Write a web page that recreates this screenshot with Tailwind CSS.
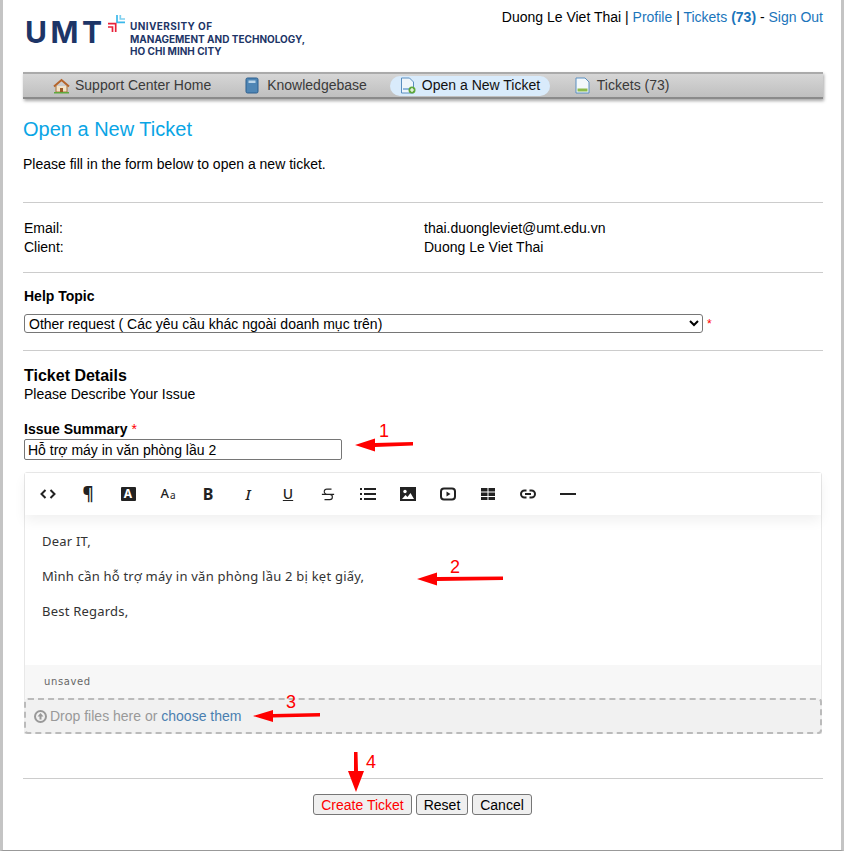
<!DOCTYPE html>
<html lang="en">
<head>
  <meta charset="UTF-8">
  <title>Open a New Ticket</title>
  <script src="https://cdn.jsdelivr.net/npm/@tailwindcss/browser@4"></script>
</head>
<body class="bg-white font-['Liberation_Sans',Arial,sans-serif] text-[14px] text-black">
  <div class="relative w-[844px] h-[851px] overflow-hidden border-x-[3px] border-b border-x-[#c4c4c4] border-b-[#999]">
    <div class="w-[800px] ml-[20px]">

      <!-- header -->
      <div class="h-[72px] flex justify-between">
        <div class="flex items-start pt-[15px] pl-[2px]">
          <span class="w-[83px] font-['Inter',sans-serif] font-bold text-[#1d3567] text-[30px] leading-[35px] tracking-[3.500px]">UMT</span>
          <svg width="17" height="17" viewBox="0 0 17 17" fill="none" stroke-width="1.700">
            <path d="M9 0v7.300h8" stroke="#3bb8ea"/>
            <path d="M12.300 0v4H17" stroke="#7fd0f0"/>
            <path d="M0 8.700h7.700V17" stroke="#e8213a"/>
            <path d="M0 12h4.500v5" stroke="#e8213a"/>
          </svg>
          <div class="mt-[5px] ml-[5px] font-['Inter',sans-serif] font-bold text-[#1d3567] text-[10px] leading-[12.600px]"><span class="tracking-[0.400px]">UNIVERSITY OF</span><br>MANAGEMENT AND TECHNOLOGY,<br>HO CHI MINH CITY</div>
        </div>
        <div class="pt-[9px] text-[14px] leading-[16px]">Duong Le Viet Thai | <a class="text-[#1b75bb]">Profile</a> | <a class="text-[#1b75bb]">Tickets <b>(73)</b></a> - <a class="text-[#1b75bb]">Sign Out</a></div>
      </div>

      <!-- nav -->
      <nav class="h-[27px] flex items-center border-t-2 border-b-[2px] border-t-[#aaa] border-b-[#8a8a8a] bg-gradient-to-b from-[#d6d6d6] to-[#bfbfbf] shadow-[1px_2px_3px_rgba(0,0,0,0.35)] text-[#3a3a3a] text-[14px]">
        <a class="flex items-center ml-[30px] gap-[5px]">
          <svg width="17" height="16" viewBox="0 0 17 16"><path d="M3 8v6h11V8" fill="#f3e3c8" stroke="#a9763c"/><path d="M1 8.500 8.500 2 16 8.500" fill="none" stroke="#b5642a" stroke-width="2"/><rect x="7" y="10" width="3" height="4" fill="#9c5b26"/><rect x="1" y="14" width="15" height="1.500" fill="#5fa83c"/></svg>
          Support Center Home</a>
        <a class="flex items-center ml-[34px] gap-[8px]">
          <svg width="14" height="17" viewBox="0 0 14 17"><rect x="1" y="1" width="12" height="15" rx="1.500" fill="#4f86b5" stroke="#2d5f8e"/><rect x="3.500" y="3.500" width="7" height="2.500" fill="#bcd6ea"/></svg>
          Knowledgebase</a>
        <a class="flex items-center ml-[23px] h-[20px] w-[160px] pl-[10px] gap-[6px] rounded-full bg-[#d9ebfb] text-[#111]">
          <svg width="16" height="17" viewBox="0 0 16 17"><path d="M1.500 1h8l4 4v11h-12z" fill="#eef5fb" stroke="#5a8fc0"/><rect x="3" y="11" width="7" height="2" fill="#8fb8dc"/><circle cx="12" cy="13" r="3.500" fill="#5fa83c"/><path d="M12 11v4M10 13h4" stroke="#fff" stroke-width="1.200"/></svg>
          Open a New Ticket</a>
        <a class="flex items-center ml-[25px] gap-[7px]">
          <svg width="15" height="17" viewBox="0 0 15 17"><path d="M1 1h9l4 4v11H1z" fill="#f3f8fc" stroke="#5a8fc0"/><rect x="2.500" y="11.500" width="10" height="3" fill="#8dbb4c"/></svg>
          Tickets (73)</a>
      </nav>

      <h1 class="mt-[18px] text-[20px] leading-[24px] text-[#0aa5e5]">Open a New Ticket</h1>
      <p class="mt-[15px] leading-[16px]">Please fill in the form below to open a new ticket.</p>
      <hr class="mt-[30px] border-[#ccc]">

      <div class="grid grid-cols-[400px_1fr] pl-[1px] mt-[16px] leading-[19px]">
        <div>Email:</div><div>thai.duongleviet@umt.edu.vn</div>
        <div>Client:</div><div>Duong Le Viet Thai</div>
      </div>
      <hr class="mt-[15px] border-[#ccc]">

      <div class="mt-[15px] pl-[1px] font-bold leading-[16px]">Help Topic</div>
      <div class="mt-[10px] pl-[1px] flex items-center">
        <select class="w-[679px] h-[19px] border border-[#767676] rounded-[3px] bg-white text-[14px] leading-[16px]">
          <option>Other request ( Các yêu cầu khác ngoài doanh mục trên)</option>
        </select>
        <span class="ml-[4px] text-[#f00] text-[12px] leading-[12px]">*</span>
      </div>
      <hr class="mt-[17px] border-[#ccc]">

      <div class="mt-[16px] pl-[1px] font-bold text-[16px] leading-[18px]">Ticket Details</div>
      <div class="pl-[1px] leading-[18px]">Please Describe Your Issue</div>

      <div class="mt-[18px] pl-[1px] leading-[16px]"><b>Issue Summary</b> <span class="text-[#f00]">*</span></div>
      <input class="mt-[2px] ml-[1px] block w-[318px] h-[21px] px-[3px] pt-[1px] border border-[#767676] rounded-[2px] text-[14px]" value="Hỗ trợ máy in văn phòng lầu 2">

      <!-- editor -->
      <div class="mt-[12px] ml-[1px] w-[798px] h-[262px] flex flex-col border border-[#e8e8e8] rounded-t-[3px]">
        <div class="relative z-10 h-[42px] flex items-center pl-[3px] bg-white shadow-[0_6px_12px_rgba(0,0,0,0.06)] font-['Noto_Sans',sans-serif] text-[#222]">
          <span class="w-[40px] flex justify-center"><svg width="16" height="16" viewBox="0 0 16 16" fill="none" stroke="#222" stroke-width="2"><path d="M5.500 4 1.500 8l4 4M10.500 4l4 4-4 4"/></svg></span>
          <span class="w-[40px] flex justify-center font-bold text-[17px] leading-[16px]">¶</span>
          <span class="w-[40px] flex justify-center"><span class="w-[15px] h-[14px] flex items-center justify-center bg-[#222] rounded-[1px] text-white font-bold text-[12px] leading-[14px]">A</span></span>
          <span class="w-[40px] flex justify-center leading-[16px]"><span class="text-[13px] font-medium">A</span><span class="text-[10px] mt-[2px] ml-[1px]">a</span></span>
          <span class="w-[40px] flex justify-center font-bold text-[16px] leading-[16px]">B</span>
          <span class="w-[40px] flex justify-center italic font-medium text-[15px] leading-[16px]">I</span>
          <span class="w-[40px] flex justify-center underline font-medium text-[14px] leading-[16px]">U</span>
          <span class="w-[40px] flex justify-center"><svg width="14" height="16" viewBox="0 0 16 16" fill="none" stroke="#222" stroke-width="1.300"><path d="M12 2.500H7a2.500 2.500 0 0 0-1 5.500M1 8.500h14M10 8.500a3 3 0 0 1 0 6H4"/></svg></span>
          <span class="w-[40px] flex justify-center"><svg width="16" height="16" viewBox="0 0 16 16" stroke="#222" stroke-width="2"><path d="M0 3h2M4 3h12M0 8h2M4 8h12M0 13h2M4 13h12"/></svg></span>
          <span class="w-[40px] flex justify-center"><svg width="16" height="16" viewBox="0 0 16 16"><rect y="1" width="16" height="14" fill="#222"/><circle cx="5" cy="5.500" r="1.700" fill="#fff"/><path d="M2 13l3.500-4 2 2 3-4 3.500 6z" fill="#fff"/></svg></span>
          <span class="w-[40px] flex justify-center"><svg width="16" height="16" viewBox="0 0 16 16"><rect x="1" y="2.500" width="14" height="11" rx="3" fill="none" stroke="#222" stroke-width="2"/><path d="M6.500 5.500v5L10.500 8z" fill="#222"/></svg></span>
          <span class="w-[40px] flex justify-center"><svg width="16" height="16" viewBox="0 0 16 16" fill="#222"><path d="M1 2h6.500v3.500H1zM8.500 2H15v3.500H8.500zM1 6.500h6.500V10H1zM8.500 6.500H15V10H8.500zM1 11h6.500v3H1zM8.500 11H15v3H8.500z"/></svg></span>
          <span class="w-[40px] flex justify-center"><svg width="16" height="16" viewBox="0 0 16 16" fill="none" stroke="#222" stroke-width="2"><path d="M6.500 4.500H4.500a3.500 3.500 0 0 0 0 7h2M9.500 4.500h2a3.500 3.500 0 0 1 0 7h-2M5 8h6"/></svg></span>
          <span class="w-[40px] flex justify-center"><svg width="16" height="16" viewBox="0 0 16 16" stroke="#222" stroke-width="2"><path d="M0 8h16"/></svg></span>
        </div>
        <div class="flex-1 pl-[17px] pt-[17px] font-['Noto_Sans',sans-serif] text-[13px] tracking-[0.220px] leading-[18px] text-[#333]">
          <p>Dear IT,</p>
          <p class="mt-[17px]">Mình cần hỗ trợ máy in văn phòng lầu 2 bị kẹt giấy,</p>
          <p class="mt-[17px]">Best Regards,</p>
        </div>
        <div class="h-[33px] pl-[19px] flex items-center bg-[#f7f7f7] font-['DejaVu_Sans',sans-serif] text-[10px] tracking-[0.600px] text-[#666]">unsaved</div>
        <div class="h-[36px] -mx-[1px] -mb-[1px] pl-[8px] flex items-center gap-[3px] bg-[#f1f1f1] border-2 border-dashed border-[#bbb] rounded-[4px] text-[#999]">
          <svg width="13" height="13" viewBox="0 0 13 13"><circle cx="6.500" cy="6.500" r="5.500" fill="none" stroke="#999" stroke-width="2"/><path d="M6.500 3 3.500 6.500h2v3h2v-3h2z" fill="#999"/></svg>
          <span>Drop files here or <a class="text-[#4a7fb0]">choose them</a></span>
        </div>
      </div>

      <hr class="mt-[44px] border-[#ccc]">
      <div class="mt-[15px] flex justify-center gap-[4px] pr-[1px]">
        <button class="h-[21px] w-[99px] border border-[#767676] rounded-[3px] bg-[#efefef] text-[#f00] text-[14px]">Create Ticket</button>
        <button class="h-[21px] w-[52px] border border-[#767676] rounded-[3px] bg-[#efefef] text-[14px]">Reset</button>
        <button class="h-[21px] w-[60px] border border-[#767676] rounded-[3px] bg-[#efefef] text-[14px]">Cancel</button>
      </div>
    </div>

    <!-- red annotations drawn over the form -->
    <svg class="absolute left-[-3px] top-0 pointer-events-none" width="844" height="851" viewBox="0 0 844 851" fill="#f00" stroke="none">
      <path d="M355 445l20-6.500v4.500l38-1v3.500l-38 1.500v4.500z"/>
      <path d="M417 579l20-6.500v4.500l66-.5v3.500l-66 1v4.500z"/>
      <path d="M253 716l20-6v4l47-1v3.500l-47 1v4.500z"/>
      <path d="M354 752h3.500l.5 19h6l-8 21-8-21h6z"/>
    </svg>
    <span class="absolute left-[376px] top-[421px] text-[#f00] text-[18px] leading-[20px]">1</span>
    <span class="absolute left-[447px] top-[557px] text-[#f00] text-[18px] leading-[20px]">2</span>
    <span class="absolute left-[283px] top-[692px] text-[#f00] text-[18px] leading-[20px]">3</span>
    <span class="absolute left-[363px] top-[752px] text-[#f00] text-[18px] leading-[20px]">4</span>
  </div>
</body>
</html>
